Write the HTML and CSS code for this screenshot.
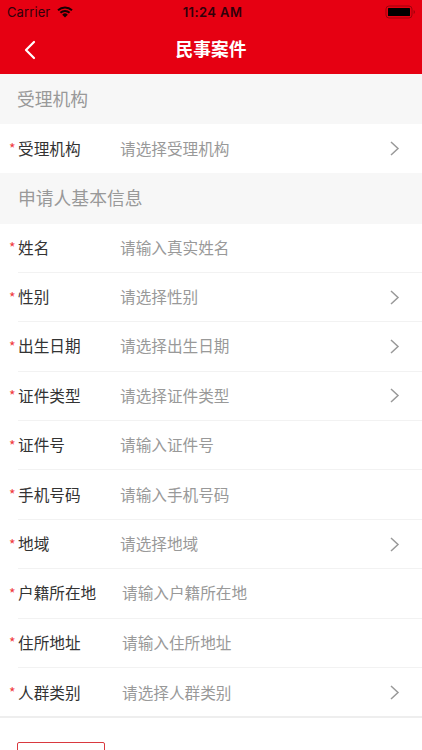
FILE: index.html
```html
<!DOCTYPE html>
<html lang="zh-CN">
<head>
    <meta charset="UTF-8">
    <meta name="viewport" content="width=device-width, initial-scale=1.0">
    <title>民事案件</title>
    <link rel="stylesheet" href="styles.css">
</head>
<body>
    <header class="header">
        <div class="status-bar">
            <div class="status-left">
                <span class="carrier">Carrier</span>
                <svg class="wifi" width="16" height="12" viewBox="0 0 16 12">
                    <path d="M1 4.2a10.2 10.2 0 0 1 14 0M3.4 6.8a6.7 6.7 0 0 1 9.2 0" fill="none" stroke="#160003" stroke-width="2"/>
                    <path d="M8 11.4L5.2 8.7a4 4 0 0 1 5.6 0z" fill="#160003"/>
                </svg>
            </div>
            <span class="time">11:24 AM</span>
            <div class="status-right">
                <svg width="31" height="14" viewBox="0 0 31 14">
                    <rect x="1" y="1" width="26" height="12" rx="3" fill="none" stroke="#a0000b"/>
                    <rect x="3" y="3" width="22" height="8" rx="0.5" fill="#000"/>
                    <path d="M28.6 5v4q1.4-.6 1.4-2t-1.4-2" fill="#a0000b"/>
                </svg>
            </div>
        </div>
        <div class="nav-bar">
            <svg class="back" width="12" height="20" viewBox="0 0 12 20">
                <path d="M10 2L2 10l8 8" fill="none" stroke="#fff" stroke-width="2.2" stroke-linecap="round" stroke-linejoin="round"/>
            </svg>
            <h1>民事案件</h1>
        </div>
    </header>

    <h2 class="section-title">受理机构</h2>
    <div class="form-row last">
        <span class="star">*</span><span class="label">受理机构</span><span class="value">请选择受理机构</span>
        <svg class="arrow" viewBox="0 0 10 16"><path d="M1 2l7 6.5L1 15"/></svg>
    </div>

    <h2 class="section-title second">申请人基本信息</h2>
    <div class="form-row">
        <span class="star">*</span><span class="label">姓名</span><span class="value">请输入真实姓名</span>
    </div>
    <div class="form-row">
        <span class="star">*</span><span class="label">性别</span><span class="value">请选择性别</span>
        <svg class="arrow" viewBox="0 0 10 16"><path d="M1 2l7 6.5L1 15"/></svg>
    </div>
    <div class="form-row">
        <span class="star">*</span><span class="label">出生日期</span><span class="value">请选择出生日期</span>
        <svg class="arrow" viewBox="0 0 10 16"><path d="M1 2l7 6.5L1 15"/></svg>
    </div>
    <div class="form-row">
        <span class="star">*</span><span class="label">证件类型</span><span class="value">请选择证件类型</span>
        <svg class="arrow" viewBox="0 0 10 16"><path d="M1 2l7 6.5L1 15"/></svg>
    </div>
    <div class="form-row">
        <span class="star">*</span><span class="label">证件号</span><span class="value">请输入证件号</span>
    </div>
    <div class="form-row">
        <span class="star">*</span><span class="label">手机号码</span><span class="value">请输入手机号码</span>
    </div>
    <div class="form-row">
        <span class="star">*</span><span class="label">地域</span><span class="value">请选择地域</span>
        <svg class="arrow" viewBox="0 0 10 16"><path d="M1 2l7 6.5L1 15"/></svg>
    </div>
    <div class="form-row wide">
        <span class="star">*</span><span class="label">户籍所在地</span><span class="value">请输入户籍所在地</span>
    </div>
    <div class="form-row wide">
        <span class="star">*</span><span class="label">住所地址</span><span class="value">请输入住所地址</span>
    </div>
    <div class="form-row wide last">
        <span class="star">*</span><span class="label">人群类别</span><span class="value">请选择人群类别</span>
        <svg class="arrow" viewBox="0 0 10 16"><path d="M1 2l7 6.5L1 15"/></svg>
    </div>

    <div class="footer">
        <button class="outline-button" type="button"></button>
    </div>
</body>
</html>
```
FILE: styles.css
```css
* {
    box-sizing: border-box;
}
body {
    margin: 0;
    height: 750px;
    overflow: hidden;
    background-color: #fff;
    color: #333;
    font-family: "Noto Sans CJK SC", sans-serif;
}
.header {
    height: 73.5px;
    background-color: #e60012;
}
/* Status bar */
.status-bar {
    display: grid;
    grid-template-columns: 1fr auto 1fr;
    align-items: center;
    height: 24px;
    padding: 0 6px 0 7px;
    color: #30000a;
    font-family: Inter, sans-serif;
    font-size: 13px;
}
.status-left {
    display: flex;
    align-items: center;
    gap: 7px;
}
.carrier {
    letter-spacing: 0.1px;
}
.time {
    padding-left: 2px;
    font-weight: 600;
    letter-spacing: 0.4px;
}
.status-right {
    display: flex;
    justify-content: flex-end;
}
/* Title bar */
.nav-bar {
    display: grid;
    grid-template-columns: 1fr auto 1fr;
    align-items: center;
    height: 49px;
}
.back {
    margin: 2px 0 0 24px;
}
h1 {
    margin: 0 0 2px;
    color: #fff;
    font-size: 17.7px;
    font-weight: 700;
    line-height: 26px;
}
.section-title {
    height: 50.5px;
    margin: 0;
    padding-left: 17px;
    background-color: #f7f7f7;
    color: #999;
    font-size: 17.8px;
    font-weight: 400;
    line-height: 48px;
}
.section-title.second {
    height: 51px;
    padding-left: 18px;
}
/* Form rows */
.form-row {
    display: flex;
    align-items: center;
    height: 49.4px;
    padding: 0 22px 2px 9px;
    font-size: 15.65px;
    background: linear-gradient(#f2f2f2, #f2f2f2) 18px 100% / 100% 1px no-repeat;
}
.form-row.last {
    height: 48.5px;
    padding-bottom: 0;
    background: none;
}
.star {
    width: 9px;
    color: #f03a3e;
    font-size: 14px;
}
.label {
    width: 102px;
    white-space: nowrap;
}
.wide .label {
    width: 104px;
}
.value {
    flex: 1;
    color: #999;
}
.arrow {
    width: 10px;
    height: 16px;
    fill: none;
    stroke: #999;
    stroke-width: 1.5;
}
.footer {
    margin-top: -1px;
    padding: 24px 17px 0;
    border-top: 2px solid #eee;
}
.outline-button {
    display: block;
    width: 88px;
    height: 36px;
    border: 1px solid #d9393f;
    border-radius: 2px;
    background-color: #fff;
}
```
